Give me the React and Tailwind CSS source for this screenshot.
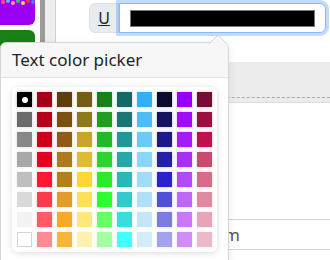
import React from "react";

const rows = [
  ["#000000", "#a30017", "#5d3d0d", "#735e12", "#178016", "#146868", "#36aef5", "#0b0b2d", "#9400f7", "#770d35"],
  ["#6b6b6b", "#b8001a", "#7a5010", "#8f7a18", "#1f9e20", "#1a7575", "#4dbdf7", "#15135e", "#a00cf8", "#9e0e3f"],
  ["#888888", "#cc0018", "#8e5c16", "#c9a627", "#27b82a", "#219696", "#6ccaf8", "#1d1a88", "#a51cf5", "#c20f4e"],
  ["#a8a8a8", "#e0001f", "#ad7a1f", "#e0ba2f", "#2ed42e", "#26a8a8", "#8ad6fa", "#2320ac", "#a830f5", "#cc4a6e"],
  ["#bfbfbf", "#ff1733", "#b57d20", "#fdd835", "#2ee82e", "#29b8b8", "#a0dcf8", "#2b22cf", "#b34af5", "#d86b8a"],
  ["#d9d9d9", "#ff3a4b", "#e19c2a", "#fde155", "#2eff2e", "#30cccc", "#b0e0f8", "#5050dd", "#bf66f6", "#e08aa2"],
  ["#f2f2f2", "#ff5a66", "#f7a92c", "#fde87a", "#66ff66", "#38dede", "#c5e6f8", "#7b7be0", "#c878f8", "#e8a5b8"],
  ["#ffffff", "#ff8a94", "#f8b53a", "#fff2b0", "#a3ffa3", "#40ffff", "#d4ecf8", "#a3a3ea", "#d08cf8", "#ecb8ca"],
];

function Swatch({ color, selected }) {
  const isWhite = color === "#ffffff";
  return (
    <div
      className={
        "w-[15px] h-[15px] flex items-center justify-center " +
        (isWhite ? "border border-[#d4d4d4]" : "")
      }
      style={{ backgroundColor: color, boxShadow: `0 0 3px ${color}55` }}
    >
      {selected && <div className="w-[6px] h-[6px] rounded-full bg-white" />}
    </div>
  );
}

export default function App() {
  return (
    <div className="relative w-[330px] h-[260px] overflow-hidden bg-white font-['Noto_Sans',sans-serif]">
      {/* page underneath */}
      <div className="flex h-full">
        <div className="w-[35px] flex flex-col gap-[5px] mr-[5px]">
          <div className="relative h-[25px] rounded-br-md bg-[#9b00f5] overflow-hidden">
            <svg className="absolute top-0 left-0" width="35" height="8" viewBox="0 0 35 8">
              <circle cx="3" cy="2" r="2" fill="#f05a5a" />
              <circle cx="8" cy="1" r="2" fill="#58b6f0" />
              <circle cx="13" cy="3" r="2" fill="#ff8fb0" />
              <circle cx="18" cy="1" r="2" fill="#3cc46a" />
              <circle cx="23" cy="3" r="2" fill="#f5d340" />
              <circle cx="28" cy="1" r="2" fill="#e03a3a" />
              <circle cx="33" cy="2" r="2" fill="#4a7ef0" />
            </svg>
          </div>
          <div className="flex-1 rounded-tr-md bg-[#178016]" />
        </div>
        <div className="w-[5px] bg-[#9a9a9a]" />
        <div className="w-[11px] bg-[#eeeeee] border-r border-[#cfcfcf]" />
        <div className="flex-1 flex flex-col">
          <div className="flex h-[30px] mt-[3px] ml-[33px] mr-[4px]">
            <div className="w-[30px] flex items-center justify-center bg-[#e9ecef] border border-[#dee2e6] rounded-l-md text-[16px] text-[#212529] underline">
              U
            </div>
            <div className="flex-1 flex items-center px-[10px] bg-white border border-[#86b7fe] rounded-r-md shadow-[0_0_0_3px_rgba(13,110,253,0.25)]">
              <div className="w-full h-[17px] bg-black border border-[#777]" />
            </div>
          </div>
          <div className="mt-[29px] h-[41px] bg-[#ececec] border-b border-[#dcdcdc] flex flex-col justify-end">
            <div className="border-b border-dashed border-[#aaaaaa] mb-[4px]" />
          </div>
          <div className="mt-[116px] border-t border-b border-[#d6d6d6] h-[31px] flex items-center">
            <div className="w-[184px] text-right text-[17px] text-[#555]">Custom</div>
          </div>
        </div>
      </div>

      {/* popover */}
      <div className="absolute left-0 top-[42px] w-[229px] h-[240px] bg-white border border-[#d5d5d5] rounded-md shadow-[0_2px_8px_rgba(0,0,0,0.08)]">
        <svg className="absolute left-[208px] top-[-9px]" width="18" height="10" viewBox="0 0 18 10">
          <polygon points="0.5,9.5 9,1 17.5,9.5" fill="#f7f7f7" stroke="#d5d5d5" />
          <rect x="1" y="9" width="16" height="2" fill="#f7f7f7" />
        </svg>
        <div className="h-[35px] px-[11px] flex items-center bg-[#f7f7f7] border-b border-[#e2e2e2] rounded-t-md text-[17px] text-[#212529]">
          Text color picker
        </div>
        <div className="pt-[9px] px-[11px]">
          <div className="w-[205px] p-[5px] rounded-md bg-white shadow-[0_1px_6px_rgba(0,0,0,0.15)] grid grid-cols-10 gap-[5px]">
            {rows.map((row, ri) =>
              row.map((c, ci) => (
                <Swatch key={ri + "-" + ci} color={c} selected={ri === 0 && ci === 0} />
              ))
            )}
          </div>
        </div>
      </div>
    </div>
  );
}
